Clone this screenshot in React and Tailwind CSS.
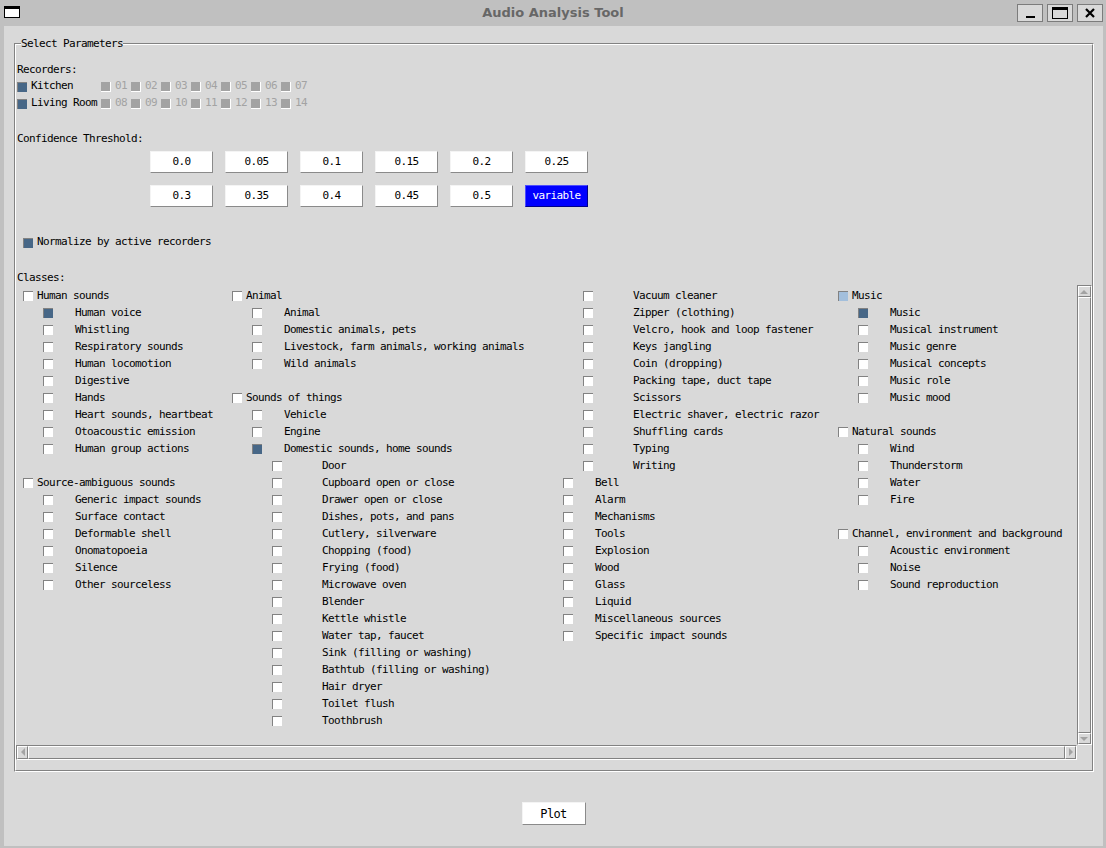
const MONO = "font-['DejaVu_Sans_Mono',monospace] text-[11px] tracking-[-0.62px] text-black";

// [level, label, state]
const col1 = [
  [0, 'Human sounds'],
  [1, 'Human voice', 'on'],
  [1, 'Whistling'],
  [1, 'Respiratory sounds'],
  [1, 'Human locomotion'],
  [1, 'Digestive'],
  [1, 'Hands'],
  [1, 'Heart sounds, heartbeat'],
  [1, 'Otoacoustic emission'],
  [1, 'Human group actions'],
  null,
  [0, 'Source-ambiguous sounds'],
  [1, 'Generic impact sounds'],
  [1, 'Surface contact'],
  [1, 'Deformable shell'],
  [1, 'Onomatopoeia'],
  [1, 'Silence'],
  [1, 'Other sourceless'],
];

const col2 = [
  [0, 'Animal'],
  [1, 'Animal'],
  [1, 'Domestic animals, pets'],
  [1, 'Livestock, farm animals, working animals'],
  [1, 'Wild animals'],
  null,
  [0, 'Sounds of things'],
  [1, 'Vehicle'],
  [1, 'Engine'],
  [1, 'Domestic sounds, home sounds', 'on'],
  [2, 'Door'],
  [2, 'Cupboard open or close'],
  [2, 'Drawer open or close'],
  [2, 'Dishes, pots, and pans'],
  [2, 'Cutlery, silverware'],
  [2, 'Chopping (food)'],
  [2, 'Frying (food)'],
  [2, 'Microwave oven'],
  [2, 'Blender'],
  [2, 'Kettle whistle'],
  [2, 'Water tap, faucet'],
  [2, 'Sink (filling or washing)'],
  [2, 'Bathtub (filling or washing)'],
  [2, 'Hair dryer'],
  [2, 'Toilet flush'],
  [2, 'Toothbrush'],
];

const col3 = [
  [2, 'Vacuum cleaner'],
  [2, 'Zipper (clothing)'],
  [2, 'Velcro, hook and loop fastener'],
  [2, 'Keys jangling'],
  [2, 'Coin (dropping)'],
  [2, 'Packing tape, duct tape'],
  [2, 'Scissors'],
  [2, 'Electric shaver, electric razor'],
  [2, 'Shuffling cards'],
  [2, 'Typing'],
  [2, 'Writing'],
  [1, 'Bell'],
  [1, 'Alarm'],
  [1, 'Mechanisms'],
  [1, 'Tools'],
  [1, 'Explosion'],
  [1, 'Wood'],
  [1, 'Glass'],
  [1, 'Liquid'],
  [1, 'Miscellaneous sources'],
  [1, 'Specific impact sounds'],
];

const col4 = [
  [0, 'Music', 'mixed'],
  [1, 'Music', 'on'],
  [1, 'Musical instrument'],
  [1, 'Music genre'],
  [1, 'Musical concepts'],
  [1, 'Music role'],
  [1, 'Music mood'],
  null,
  [0, 'Natural sounds'],
  [1, 'Wind'],
  [1, 'Thunderstorm'],
  [1, 'Water'],
  [1, 'Fire'],
  null,
  [0, 'Channel, environment and background'],
  [1, 'Acoustic environment'],
  [1, 'Noise'],
  [1, 'Sound reproduction'],
];

const thresholds = [
  ['0.0', '0.05', '0.1', '0.15', '0.2', '0.25'],
  ['0.3', '0.35', '0.4', '0.45', '0.5', 'variable'],
];

const indent = ['pl-0', 'pl-[20px]', 'pl-[40px]'];
const labelGap = ['ml-[4px]', 'ml-[22px]', 'ml-[40px]'];
const fills = { off: 'bg-white', on: 'bg-[#476787]', mixed: 'bg-[#a3bfdc]' };

// sunken / raised 1px bevels, Tk style
const SUNKEN = 'border border-t-[#828282] border-l-[#828282] border-r-white border-b-white';
const RAISED = 'border border-t-white border-l-white border-r-[#828282] border-b-[#828282]';

function Box({ state = 'off' }) {
  return <span className={`block w-[10px] h-[10px] shrink-0 border-l border-t border-[#828282] ${fills[state]}`} />;
}

function DisabledBox() {
  return <span className="block w-[10px] h-[10px] shrink-0 bg-[#a3a3a3] border-r border-b border-white" />;
}

function Item({ item }) {
  if (!item) return <div className="h-[17px]" />;
  const [level, label, state] = item;
  return (
    <div className={`h-[17px] flex items-center ${indent[level]}`}>
      <Box state={state} />
      <span className={`${labelGap[level]} whitespace-nowrap leading-[17px]`}>{label}</span>
    </div>
  );
}

function Arrow({ dir }) {
  const pts = {
    up: '0,5 4,1 8,5',
    down: '0,1 8,1 4,5',
    left: '5,0 5,8 1,4',
    right: '1,0 1,8 5,4',
  }[dir];
  const vertical = dir === 'up' || dir === 'down';
  return (
    <svg viewBox={vertical ? '0 0 9 6' : '0 0 6 9'} className={vertical ? 'w-[9px] h-[6px]' : 'w-[6px] h-[9px]'}>
      <polygon points={pts} fill="#a3a3a3" />
    </svg>
  );
}

function RecorderRow({ name, ids }) {
  return (
    <div className="h-[17px] flex items-center pl-[1px]">
      <div className="w-[84px] flex items-center">
        <Box state="on" />
        <span className="ml-[4px] whitespace-nowrap">{name}</span>
      </div>
      {ids.map((id) => (
        <div key={id} className="w-[30px] flex items-center">
          <DisabledBox />
          <span className="ml-[4px] text-[#a3a3a3]">{id}</span>
        </div>
      ))}
    </div>
  );
}

function TitleBar() {
  return (
    <div className="h-[26px] shrink-0 relative flex items-center justify-center">
      <svg viewBox="0 0 16 12" className="absolute left-[4px] top-[6px] w-[16px] h-[12px]">
        <rect x="0.5" y="0.5" width="15" height="11" fill="white" stroke="black" />
        <rect x="0" y="0" width="16" height="3" fill="black" />
      </svg>
      <span className="font-['DejaVu_Sans',sans-serif] font-bold text-[13px] text-[#676767] tracking-normal">Audio Analysis Tool</span>
      <div className="absolute right-[3px] top-[4px] flex gap-[4px]">
        <div className="w-[26px] h-[18px] bg-[#d9d9d9] border border-[#7c7c7c] flex items-end justify-center pb-[3px]">
          <span className="block w-[9px] h-[2px] bg-black" />
        </div>
        <div className="w-[26px] h-[18px] bg-[#d9d9d9] border border-[#7c7c7c] flex items-center justify-center">
          <span className="block w-[16px] h-[12px] border border-black border-t-[3px]" />
        </div>
        <div className="w-[26px] h-[18px] bg-[#d9d9d9] border border-[#7c7c7c] flex items-center justify-center">
          <svg viewBox="0 0 10 10" className="w-[10px] h-[10px]">
            <path d="M1 1 L9 9 M9 1 L1 9" stroke="black" strokeWidth="2.2" />
          </svg>
        </div>
      </div>
    </div>
  );
}

export default function App() {
  return (
    <div className={`w-[1106px] h-[848px] bg-[#c0c0c0] flex flex-col overflow-hidden ${MONO}`}>
      <TitleBar />
      <div className="flex-1 ml-[4px] mr-[3px] mb-[2px] bg-[#d9d9d9] flex flex-col">
        {/* Select Parameters frame (groove = sunken outer + raised inner) */}
        <div className={`relative ml-[10px] mt-[17px] w-[1080px] h-[729px] ${SUNKEN}`}>
          <span className="absolute left-[6px] top-[-9px] h-[17px] leading-[17px] bg-[#d9d9d9] whitespace-nowrap">
            Select Parameters
          </span>
          <div className={`w-full h-full flex flex-col ${RAISED}`}>
            <div className="mt-[16px] h-[17px] leading-[17px] pl-[1px]">Recorders:</div>
            <RecorderRow name="Kitchen" ids={['01', '02', '03', '04', '05', '06', '07']} />
            <RecorderRow name="Living Room" ids={['08', '09', '10', '11', '12', '13', '14']} />

            <div className="mt-[18px] h-[17px] leading-[17px] pl-[1px]">Confidence Threshold:</div>
            {thresholds.map((row, i) => (
              <div key={i} className={`ml-[134px] flex gap-[12px] ${i === 0 ? 'mt-[4px]' : 'mt-[12px]'}`}>
                {row.map((v) =>
                  v === 'variable' ? (
                    <div key={v} className="w-[63px] h-[22px] bg-[#0000ff] text-white border border-t-[#4d4dff] border-l-[#4d4dff] border-r-[#00008a] border-b-[#00008a] flex items-center justify-center">
                      {v}
                    </div>
                  ) : (
                    <div key={v} className="w-[63px] h-[22px] bg-white border border-t-[#f4f4f4] border-l-[#f4f4f4] border-r-[#8a8a8a] border-b-[#8a8a8a] flex items-center justify-center">
                      {v}
                    </div>
                  )
                )}
              </div>
            ))}

            <div className="mt-[27px] h-[17px] flex items-center pl-[7px]">
              <Box state="on" />
              <span className="ml-[4px] whitespace-nowrap">Normalize by active recorders</span>
            </div>

            <div className="mt-[17px] h-[17px] leading-[19px] pl-[1px]">Classes:</div>

            {/* Scrolled class list */}
            <div className="flex h-[460px]">
              <div className="w-[1061px] h-full overflow-hidden flex pl-[7px] pt-[2px]">
                {[
                  ['w-[209px]', col1],
                  ['w-[311px]', col2],
                  ['w-[295px]', col3],
                  ['flex-1', col4],
                ].map(([w, items], i) => (
                  <div key={i} className={`${w} shrink-0 flex flex-col`}>
                    {items.map((it, j) => (
                      <Item key={j} item={it} />
                    ))}
                  </div>
                ))}
              </div>
              <div className={`w-[15px] h-full flex flex-col ${SUNKEN}`}>
                <div className={`h-[11px] shrink-0 flex items-center justify-center ${RAISED}`}>
                  <Arrow dir="up" />
                </div>
                <div className={`flex-1 ${RAISED}`} />
                <div className={`h-[11px] shrink-0 flex items-center justify-center ${RAISED}`}>
                  <Arrow dir="down" />
                </div>
              </div>
            </div>
            <div className={`w-[1061px] h-[15px] flex ${SUNKEN}`}>
              <div className={`w-[11px] shrink-0 flex items-center justify-center ${RAISED}`}>
                <Arrow dir="left" />
              </div>
              <div className={`flex-1 ${RAISED}`} />
              <div className={`w-[11px] shrink-0 flex items-center justify-center ${RAISED}`}>
                <Arrow dir="right" />
              </div>
            </div>
          </div>
        </div>

        <div className="mt-[30px] flex justify-center">
          <div className="w-[64px] h-[23px] bg-white border border-t-[#f4f4f4] border-l-[#f4f4f4] border-r-[#8a8a8a] border-b-[#8a8a8a] flex items-center justify-center text-[12px]">
            Plot
          </div>
        </div>
      </div>
    </div>
  );
}
